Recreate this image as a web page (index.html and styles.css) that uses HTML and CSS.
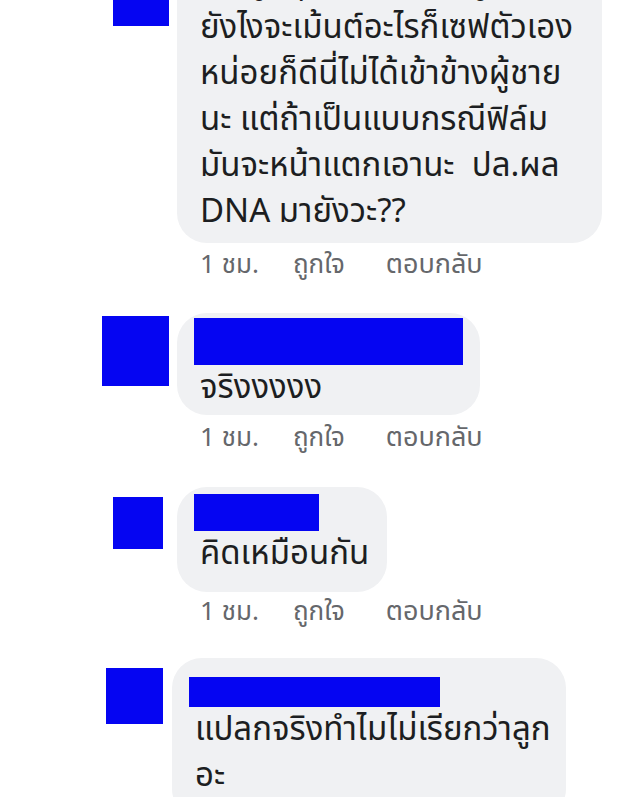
FILE: index.html
```html
<!DOCTYPE html>
<html lang="th">
<head>
<meta charset="utf-8">
<title>Comments</title>
<link rel="stylesheet" href="styles.css">
</head>
<body>
<div class="thread">

  <div class="comment c1">
    <div class="avatar av1"></div>
    <div class="body">
      <div class="bubble b1">
        <p class="text">ก็ไม่รู้สิคุณ แต่ถ้าเป็นผู้หญิง<br>ยังไงจะเม้นต์อะไรก็เซฟตัวเอง<br>หน่อยก็ดีนี่ไม่ได้เข้าข้างผู้ชาย<br>นะ แต่ถ้าเป็นแบบกรณีฟิล์ม<br>มันจะหน้าแตกเอานะ&nbsp; ปล.ผล<br>DNA มายังวะ??</p>
      </div>
      <div class="meta m1"><span>1 ชม.</span><span>ถูกใจ</span><span>ตอบกลับ</span></div>
    </div>
  </div>

  <div class="comment c2">
    <div class="avatar av2"></div>
    <div class="body">
      <div class="bubble b2">
        <div class="name n2"></div>
        <p class="text">จริงงงงง</p>
      </div>
      <div class="meta m2"><span>1 ชม.</span><span>ถูกใจ</span><span>ตอบกลับ</span></div>
    </div>
  </div>

  <div class="comment c3">
    <div class="avatar av3"></div>
    <div class="body">
      <div class="bubble b3">
        <div class="name n3"></div>
        <p class="text">คิดเหมือนกัน</p>
      </div>
      <div class="meta m3"><span>1 ชม.</span><span>ถูกใจ</span><span>ตอบกลับ</span></div>
    </div>
  </div>

  <div class="comment c4">
    <div class="avatar av4"></div>
    <div class="body">
      <div class="bubble b4">
        <div class="name n4"></div>
        <p class="text">แปลกจริงทำไมไม่เรียกว่าลูก<br>อะ</p>
      </div>
    </div>
  </div>

</div>
</body>
</html>
```

FILE: styles.css
```css
html, body {
  margin: 0;
  padding: 0;
  background: #ffffff;
}

body {
  font-family: "Noto Sans Thai", "Noto Sans", sans-serif;
  color: #1c1e21;
  overflow: hidden;
  height: 797px;
}

.thread {
  display: flex;
  flex-direction: column;
}

.comment {
  display: flex;
  align-items: flex-start;
}

.avatar {
  background: #0505f2;
  flex: none;
}

.body {
  display: flex;
  flex-direction: column;
  align-items: flex-start;
}

.bubble {
  background: #f0f1f3;
  border-radius: 30px;
  padding: 0 22px 0 23px;
}

.text {
  margin: 0;
  font-size: 33px;
  line-height: 46px;
  white-space: nowrap;
}

.name {
  background: #0505f2;
  margin-left: -6px;
}

.meta {
  display: flex;
  font-size: 26px;
  line-height: 30px;
  color: #65676b;
  padding-left: 23px;
  gap: 34px;
}

.meta span:last-child {
  margin-left: 7px;
  font-size: 27px;
}

/* comment 1 (cut off at the top) */
.c1 { margin-top: -41px; }
.av1 { width: 56px; height: 67px; margin-left: 113px; margin-right: 8px; }
.b1 { box-sizing: border-box; width: 425px; padding-bottom: 8px; }
.m1 { margin-top: 7px; }

/* comment 2 */
.c2 { margin-top: 33px; }
.av2 { width: 67px; height: 70px; margin-left: 102px; margin-right: 8px; margin-top: 3px; }
.b2 { padding-top: 5px; padding-right: 17px; padding-bottom: 4px; }
.n2 { width: 269px; height: 47px; }
.m2 { margin-top: 8px; }

/* comment 3 */
.c3 { margin-top: 34px; }
.av3 { width: 50px; height: 52px; margin-left: 113px; margin-right: 14px; margin-top: 10px; }
.b3 { padding-top: 7px; padding-right: 18px; padding-bottom: 15px; }
.n3 { width: 125px; height: 37px; }
.m3 { margin-top: 5px; }

/* comment 4 */
.c4 { margin-top: 31px; }
.av4 { width: 57px; height: 56px; margin-left: 106px; margin-right: 9px; margin-top: 10px; }
.b4 { padding-top: 19px; padding-left: 23px; padding-right: 15px; padding-bottom: 20px; }
.n4 { width: 251px; height: 30px; }
```
